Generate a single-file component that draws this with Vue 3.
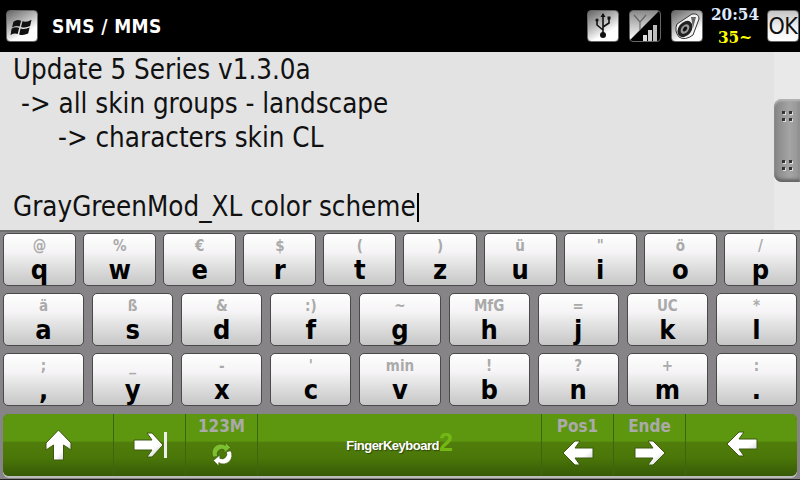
<script setup>
const row1 = [
  ['@', 'q'], ['%', 'w'], ['€', 'e'], ['$', 'r'], ['(', 't'],
  [')', 'z'], ['ü', 'u'], ['"', 'i'], ['ö', 'o'], ['/', 'p'],
];
const row2 = [
  ['ä', 'a'], ['ß', 's'], ['&', 'd'], [':)', 'f'], ['~', 'g'],
  ['MfG', 'h'], ['=', 'j'], ['UC', 'k'], ['*', 'l'],
];
const row3 = [
  [';', ','], ['_', 'y'], ['-', 'x'], ["'", 'c'], ['min', 'v'],
  ['!', 'b'], ['?', 'n'], ['+', 'm'], [':', '.'],
];
</script>

<template>
  <div class="screen">
    <header class="topbar">
      <div class="tile start">
        <svg width="26" height="20" viewBox="0 0 24 21">
          <path d="M3 6 Q7 3 11 5 L9.5 11 Q6 9.5 1.5 12 Z M12.5 5.5 Q17 7 22 4 L20.5 10.5 Q15.5 13 11 11.5 Z M1 13.5 Q5 11 9 12.5 L7.5 19 Q4 17.5 0 20 Z M10.5 13 Q15 14.5 20 12 L18.5 18.5 Q13.5 21 9 19.5 Z" fill="#111" />
        </svg>
      </div>
      <span class="title">SMS / MMS</span>
      <div class="status">
        <div class="tile">
          <svg width="24" height="28" viewBox="0 0 24 28">
            <path d="M12 2 L12 24 M12 18 L6 13 L6 9 M12 15 L18 11 L18 7" fill="none" stroke="#111" stroke-width="1.6" />
            <circle cx="12" cy="23" r="3" fill="#111" />
            <circle cx="6" cy="8" r="1.6" fill="#111" />
            <rect x="16.5" y="4.5" width="3" height="3" fill="#111" />
            <path d="M9.5 5 L12 1 L14.5 5 Z" fill="#111" />
          </svg>
        </div>
        <div class="tile signal">
          <svg width="30" height="30" viewBox="0 0 30 30">
            <path d="M0 0 H29 L0 29 Z" fill="url(#sigfade)" />
            <path d="M4 4 L10 11 L16 4 M10 11 V19" fill="none" stroke="#666" stroke-width="1.2" />
            <rect x="13" y="24" width="4" height="6" fill="#ddd" />
            <rect x="18" y="19" width="4" height="11" fill="#ccc" />
            <rect x="23" y="14" width="4" height="16" fill="#bbb" />
            <defs>
              <linearGradient id="sigfade" x1="0" y1="0" x2="0" y2="1">
                <stop offset="0" stop-color="#8a8a8a" />
                <stop offset="1" stop-color="#fff" />
              </linearGradient>
            </defs>
          </svg>
        </div>
        <div class="tile">
          <svg width="28" height="28" viewBox="0 0 28 28">
            <path d="M4 12 L19 2 Q26 1 26 7 L20 23 Q12 29 6 25 Q1 19 4 12 Z" fill="#f2f2f2" stroke="#333" stroke-width="1" />
            <ellipse cx="12" cy="17" rx="6.5" ry="9" transform="rotate(38 12 17)" fill="#222" />
            <ellipse cx="12" cy="17" rx="3.6" ry="5.4" transform="rotate(38 12 17)" fill="#9a9a9a" />
            <ellipse cx="12" cy="17" rx="1.8" ry="2.8" transform="rotate(38 12 17)" fill="#111" />
            <path d="M18 5 L23 5 L20 16" fill="#666" />
          </svg>
        </div>
        <div class="clock">
          <span class="time">20:54</span>
          <span class="temp">35~</span>
        </div>
        <div class="tile ok">OK</div>
      </div>
    </header>

    <section class="editor">
      <div class="text">
        <div>Update 5 Series v1.3.0a</div>
        <div class="in1">-&gt; all skin groups - landscape</div>
        <div class="in2">-&gt; characters skin CL</div>
        <div>&nbsp;</div>
        <div>GrayGreenMod_XL color scheme<span class="caret"></span></div>
      </div>
      <div class="track">
        <div class="thumb">
          <span class="grip"><i></i><i></i><i></i><i></i></span>
          <span class="grip"><i></i><i></i><i></i><i></i></span>
        </div>
      </div>
    </section>

    <section class="keyboard">
      <div class="row row-top">
        <button v-for="k in row1" :key="k[1]" class="key">
          <span class="alt">{{ k[0] }}</span>
          <span class="main">{{ k[1] }}</span>
        </button>
      </div>
      <div class="row">
        <button v-for="k in row2" :key="k[1]" class="key">
          <span class="alt">{{ k[0] }}</span>
          <span class="main">{{ k[1] }}</span>
        </button>
      </div>
      <div class="row">
        <button v-for="k in row3" :key="k[1]" class="key">
          <span class="alt">{{ k[0] }}</span>
          <span class="main">{{ k[1] }}</span>
        </button>
      </div>
      <div class="funcs">
        <div class="fn">
          <svg width="27" height="32" viewBox="0 0 27 32">
            <path d="M13.5 1 L26 14 V21 L18.5 16 V31 H8.5 V16 L1 21 V14 Z" fill="url(#arrowfill)" stroke="#3d5a10" stroke-width="1" />
            <defs>
              <linearGradient id="arrowfill" x1="0" y1="0" x2="1" y2="1">
                <stop offset="0" stop-color="#fff" />
                <stop offset="0.65" stop-color="#fff" />
                <stop offset="1" stop-color="#bbb" />
              </linearGradient>
            </defs>
          </svg>
        </div>
        <div class="fn">
          <svg width="34" height="26" viewBox="0 0 34 26">
            <path d="M1 8 H19 L14 1 H19 L30 13 L19 25 H14 L19 18 H1 Z" fill="url(#arrowfill)" stroke="#3d5a10" stroke-width="1" />
            <rect x="31" y="0" width="3" height="26" fill="#eee" />
          </svg>
        </div>
        <div class="fn stack">
          <span class="label">123M</span>
          <svg class="spin" width="26" height="26" viewBox="0 0 24 24">
            <path d="M4 15 A8 8 0 0 1 15 4 L15 1 L20 6 L14 11 L14 8 A4.5 4.5 0 0 0 8 14 Z" fill="#7cc030" stroke="#3d5a10" stroke-width="0.6" />
            <path d="M20 9 A8 8 0 0 1 9 20 L9 23 L4 18 L10 13 L10 16 A4.5 4.5 0 0 0 16 10 Z" fill="#fff" stroke="#3d5a10" stroke-width="0.6" />
          </svg>
        </div>
        <div class="fn brand">
          <span class="brand-name">FingerKeyboard</span><span class="brand-two">2</span>
        </div>
        <div class="fn stack">
          <span class="label">Pos1</span>
          <svg width="32" height="26" viewBox="0 0 32 26">
            <path d="M1 13 L13 1 H18 L13 8 H31 V18 H13 L18 25 H13 Z" fill="url(#arrowfill)" stroke="#3d5a10" stroke-width="1" />
          </svg>
        </div>
        <div class="fn stack">
          <span class="label">Ende</span>
          <svg width="32" height="26" viewBox="0 0 32 26">
            <path d="M31 13 L19 1 H14 L19 8 H1 V18 H19 L14 25 H19 Z" fill="url(#arrowfill)" stroke="#3d5a10" stroke-width="1" />
          </svg>
        </div>
        <div class="fn back">
          <svg width="32" height="26" viewBox="0 0 32 26">
            <path d="M1 13 L13 1 H18 L13 8 H31 V18 H13 L18 25 H13 Z" fill="url(#arrowfill)" stroke="#3d5a10" stroke-width="1" />
          </svg>
        </div>
      </div>
    </section>
  </div>
</template>

<style scoped>
.screen {
  width: 800px;
  height: 480px;
  display: flex;
  flex-direction: column;
  overflow: hidden;
  background: #000;
  font-family: "DejaVu Sans Condensed", "DejaVu Sans", sans-serif;
}

.topbar {
  height: 52px;
  flex: none;
  display: flex;
  align-items: center;
  padding-left: 6px;
  background: #000;
}
.tile {
  width: 32px;
  height: 32px;
  box-sizing: border-box;
  flex: none;
  display: flex;
  align-items: center;
  justify-content: center;
  border: 1px solid #666;
  border-radius: 4px;
  background: linear-gradient(150deg, #666 0%, #b8b8b8 40%, #fff 70%);
  overflow: hidden;
}
.title {
  margin-left: 14px;
  color: #fff;
  font-size: 19px;
  font-weight: bold;
  letter-spacing: 0.4px;
}
.status {
  margin-left: auto;
  display: flex;
  align-items: center;
  padding-right: 1px;
}
.status .tile + .tile {
  margin-left: 10px;
}
.signal {
  background: #000;
}
.clock {
  width: 64px;
  display: flex;
  flex-direction: column;
  align-items: center;
  font-family: "DejaVu Serif Condensed", "Liberation Serif", serif;
  font-weight: bold;
  font-size: 17px;
  line-height: 23px;
}
.time {
  color: #dfeaff;
}
.temp {
  color: #ff0;
}
.ok {
  color: #111;
  font-size: 23px;
  letter-spacing: -0.5px;
  background: linear-gradient(#c4c4c4 0%, #eee 50%, #fff 100%);
}

.editor {
  height: 178px;
  flex: none;
  display: flex;
  background: #e3e3e3;
}
.text {
  flex: 1;
  padding: 0 0 0 13px;
  font-size: 27.5px;
  line-height: 34.2px;
  color: #111;
  white-space: nowrap;
}
.in1 {
  padding-left: 8px;
}
.in2 {
  padding-left: 45px;
}
.caret {
  display: inline-block;
  width: 2px;
  height: 29px;
  margin-left: 1px;
  vertical-align: -6px;
  background: #000;
}
.track {
  width: 26px;
  flex: none;
  padding-top: 47px;
  background: #e9e9e9;
}
.thumb {
  width: 26px;
  height: 83px;
  box-sizing: border-box;
  padding: 12px 0;
  display: flex;
  flex-direction: column;
  justify-content: space-between;
  align-items: center;
  border-radius: 8px 0 0 8px;
  background: linear-gradient(90deg, #858585, #a4a4a4 60%, #949494);
  box-shadow: inset 0 2px 2px #b5b5b5, inset 0 -3px 3px #666;
}
.grip {
  width: 10px;
  display: grid;
  grid-template-columns: 3px 3px;
  gap: 4px;
  justify-content: center;
}
.grip i {
  height: 3px;
  background: #333;
  box-shadow: 1px 1px 0 #ddd;
}

.keyboard {
  flex: 1;
  box-sizing: border-box;
  padding: 0 3px;
  display: flex;
  flex-direction: column;
  border-top: 2px solid #6e6e6e;
  border-bottom: 1px solid #222;
  background: #868486;
}
.row {
  display: flex;
  gap: 8px;
  height: 53px;
  margin-top: 7px;
}
.row-top {
  gap: 7px;
  margin-top: 1px;
}
.key {
  flex: 1;
  min-width: 0;
  padding: 0;
  display: flex;
  flex-direction: column;
  align-items: center;
  border: 1px solid #4a4a4a;
  border-radius: 5px;
  background: linear-gradient(#fff 0%, #f6f4f6 35%, #e2e2e2 60%, #c6c6c6 100%);
  font-family: inherit;
}
.alt {
  height: 22px;
  margin-top: 1px;
  color: #aaa;
  font-size: 15px;
  font-weight: bold;
  line-height: 22px;
}
.main {
  height: 28px;
  color: #000;
  font-size: 27px;
  font-weight: bold;
  line-height: 25px;
}

.funcs {
  height: 62px;
  margin-top: 8px;
  display: grid;
  grid-template-columns: 110px 71px 71px 283px 71px 71px 1fr;
  gap: 1px;
  border-radius: 6px;
  overflow: hidden;
  background: #3c6510;
  box-shadow: 0 2px 0 #bdbdbd;
}
.fn {
  display: flex;
  align-items: center;
  justify-content: center;
  background: linear-gradient(#5d960f 0%, #5d960f 44%, #517d0b 45%, #4b7709 70%, #365a06 100%);
}
.stack {
  flex-direction: column;
  justify-content: flex-start;
  padding-top: 4px;
  gap: 5px;
}
.spin {
  margin-top: 1px;
}
.label {
  color: #aaa;
  font-size: 17px;
  font-weight: bold;
  line-height: 17px;
}
.back svg {
  margin-bottom: 2px;
}
.brand-name {
  color: #fff;
  font-family: "Liberation Sans", sans-serif;
  font-size: 13px;
  font-weight: bold;
  letter-spacing: -0.5px;
  text-shadow: 1px 1px 1px #2c4706;
}
.brand-two {
  margin-top: -7px;
  color: #74b814;
  font-family: "Liberation Sans", sans-serif;
  font-size: 25px;
  font-weight: bold;
  line-height: 26px;
}
</style>

<style>
html,
body {
  margin: 0;
  background: #000;
}
</style>
